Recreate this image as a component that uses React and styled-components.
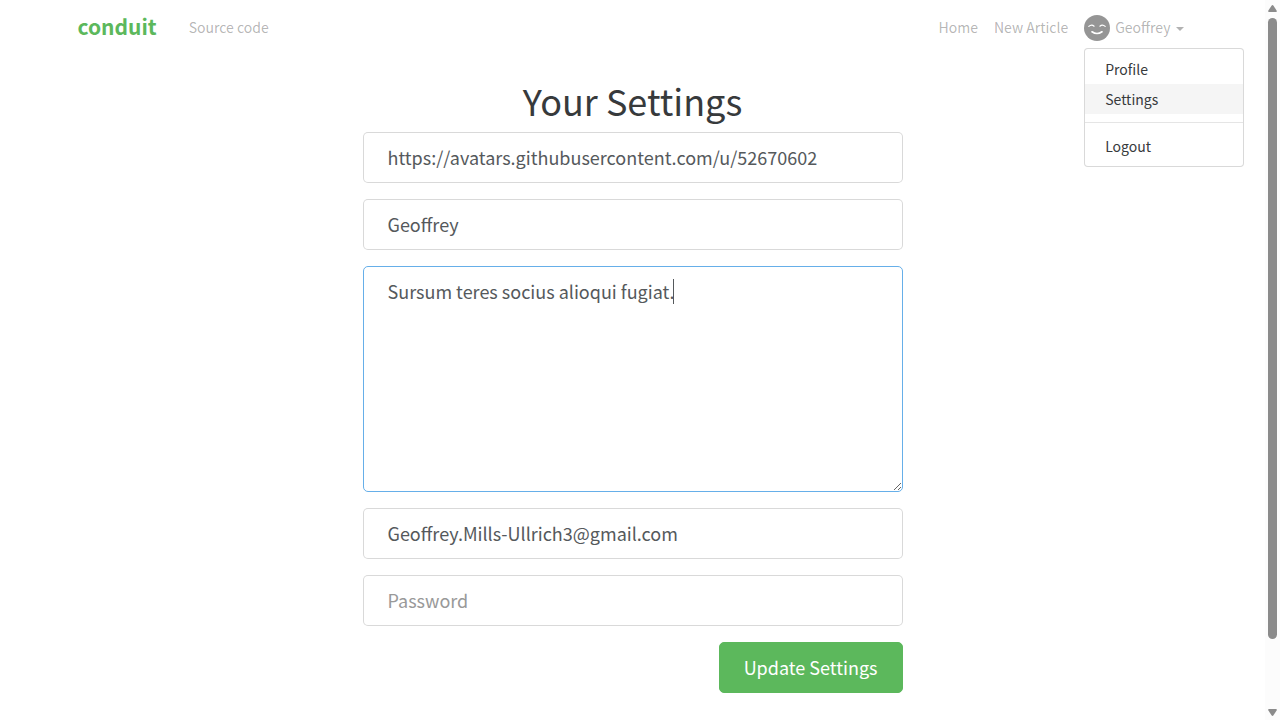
import React from "react";
import styled, { createGlobalStyle } from "styled-components";

const GlobalStyle = createGlobalStyle`
  *, *::before, *::after { box-sizing: border-box; }
  body {
    margin: 0;
    background: #fff;
    color: #373a3c;
    font-family: "Noto Sans CJK SC", "Noto Sans", sans-serif;
    font-size: 14px;
    line-height: 24px;
  }
`;

const Page = styled.div`
  min-height: 100vh;
  padding-right: 15px;
`;

const Container = styled.div`
  width: 100%;
  max-width: 1140px;
  margin: 0 auto;
  padding: 0 15px;
`;

const Navbar = styled.nav`
  padding: 8px 0;
`;

const NavRow = styled(Container)`
  display: flex;
  align-items: center;
  height: 40px;
`;

const Brand = styled.a`
  margin-right: 32px;
  padding-bottom: 4px;
  color: #5cb85c;
  font-size: 21px;
  font-weight: 700;
  text-decoration: none;
`;

const NavList = styled.ul`
  display: flex;
  align-items: center;
  gap: 16px;
  margin: 0 0 0 auto;
  padding: 0;
  list-style: none;
`;

const NavItem = styled.li`
  position: relative;
`;

const NavLink = styled.a`
  display: block;
  padding-bottom: 2px;
  color: rgba(0, 0, 0, 0.3);
  text-decoration: none;
`;

const UserToggle = styled.button`
  display: flex;
  align-items: center;
  gap: 5px;
  padding: 0;
  border: 0;
  background: none;
  color: rgba(0, 0, 0, 0.3);
  font: inherit;
  cursor: pointer;
`;

const UserName = styled.span`
  padding-bottom: 2px;
`;

const Chevron = styled.span`
  margin: 2px 4px 0 0;
  border: 4px solid transparent;
  border-top-color: currentColor;
  border-bottom: 0;
`;

const Menu = styled.div`
  position: absolute;
  top: 100%;
  left: 0;
  width: 160px;
  margin-top: 7px;
  padding: 5px 0;
  border: 1px solid rgba(0, 0, 0, 0.15);
  border-radius: 4px;
  background: #fff;
`;

const MenuLink = styled.a`
  display: block;
  padding: 3px 20px;
  background: ${(p) => (p.$active ? "#f5f5f5" : "transparent")};
  color: #373a3c;
  text-decoration: none;
`;

const Divider = styled.hr`
  height: 1px;
  margin: 8px 0;
  border: 0;
  background: #e5e5e5;
`;

const Main = styled.main`
  width: 100%;
  max-width: 570px;
  margin: 24px auto 0;
  padding: 0 15px 27px;
`;

const Title = styled.h1`
  margin: 0 0 12px;
  font-size: 36px;
  font-weight: 400;
  line-height: 40px;
  text-align: center;
`;

const Form = styled.form`
  display: flex;
  flex-direction: column;
  gap: 16px;
`;

const Field = styled.div`
  position: relative;
`;

const Input = styled.input`
  display: block;
  width: 100%;
  height: 51px;
  padding: 11px 24px 13px;
  border: 1px solid rgba(0, 0, 0, 0.15);
  border-radius: 5px;
  outline: 0;
  background: #fff;
  color: #55595c;
  font-family: inherit;
  font-size: 18px;
  line-height: 25px;

  &::placeholder { color: #999; opacity: 1; }
`;

const TextArea = styled(Input)`
  height: 226px;
  padding: 12px 24px;
  border-color: #66afe9;
  resize: vertical;
`;

const TextCursor = styled.span`
  position: absolute;
  top: 13px;
  left: 310px;
  width: 1px;
  height: 25px;
  background: #55595c;
`;

const SubmitButton = styled.button`
  align-self: flex-end;
  height: 51px;
  padding: 12px 24px;
  border: 1px solid #5cb85c;
  border-radius: 5px;
  background: #5cb85c;
  color: #fff;
  font-family: inherit;
  font-size: 18px;
  line-height: 25px;
  cursor: pointer;
`;

const ScrollTrack = styled.div`
  position: fixed;
  top: 0;
  right: 0;
  bottom: 0;
  display: flex;
  flex-direction: column;
  align-items: center;
  justify-content: space-between;
  width: 15px;
  padding: 5px 0 4px;
  background: #fcfcfc;
`;

const ScrollThumb = styled.div`
  flex: 0 1 621px;
  width: 9px;
  margin: 6px 0 auto;
  border-radius: 5px;
  background: #8b8b8b;
`;

const Avatar = () => (
  <svg width="26" height="26" viewBox="0 0 26 26" aria-hidden="true">
    <circle cx="13" cy="13" r="13" fill="#959595" />
    <g fill="none" stroke="#fff" strokeLinecap="round">
      <path d="M4.8 11.4Q7.6 8.8 10.1 11.2M15.9 11.2Q18.4 8.8 21.2 11.4" strokeWidth="1.2" />
      <path d="M8 16.8Q13 20.2 18 16.8" strokeWidth="1.7" />
    </g>
  </svg>
);

const ScrollArrow = ({ down }) => (
  <svg width="9" height="7" viewBox="0 0 9 7" aria-hidden="true">
    <path
      d={down ? "M1 0H8Q9.3 .2 8.6 1.6L5.5 6.3Q4.5 7.5 3.5 6.3L.4 1.6Q-.3 .2 1 0Z" : "M1 7H8Q9.3 6.8 8.6 5.4L5.5 .7Q4.5-.5 3.5 .7L.4 5.4Q-.3 6.8 1 7Z"}
      fill="#8b8b8b"
    />
  </svg>
);

export default function App() {
  return (
    <>
      <GlobalStyle />
      <Page>
        <Navbar>
          <NavRow>
            <Brand href="#home">conduit</Brand>
            <NavLink href="#source">Source code</NavLink>
            <NavList>
              <NavItem><NavLink href="#home">Home</NavLink></NavItem>
              <NavItem><NavLink href="#editor">New Article</NavLink></NavItem>
              <NavItem>
                <UserToggle type="button" aria-haspopup="true" aria-expanded="true">
                  <Avatar />
                  <UserName>Geoffrey</UserName>
                  <Chevron />
                </UserToggle>
                <Menu>
                  <MenuLink href="#profile">Profile</MenuLink>
                  <MenuLink href="#settings" $active>Settings</MenuLink>
                  <Divider />
                  <MenuLink href="#logout">Logout</MenuLink>
                </Menu>
              </NavItem>
            </NavList>
          </NavRow>
        </Navbar>
        <Main>
          <Title>Your Settings</Title>
          <Form onSubmit={(e) => e.preventDefault()}>
            <Input type="text" aria-label="Profile picture URL" defaultValue="https://avatars.githubusercontent.com/u/52670602" />
            <Input type="text" aria-label="Username" defaultValue="Geoffrey" />
            <Field>
              <TextArea as="textarea" aria-label="Bio" defaultValue="Sursum teres socius alioqui fugiat." />
              <TextCursor />
            </Field>
            <Input type="email" aria-label="Email" defaultValue="Geoffrey.Mills-Ullrich3@gmail.com" />
            <Input type="password" aria-label="Password" placeholder="Password" />
            <SubmitButton type="submit">Update Settings</SubmitButton>
          </Form>
        </Main>
      </Page>
      <ScrollTrack>
        <ScrollArrow />
        <ScrollThumb />
        <ScrollArrow down />
      </ScrollTrack>
    </>
  );
}
